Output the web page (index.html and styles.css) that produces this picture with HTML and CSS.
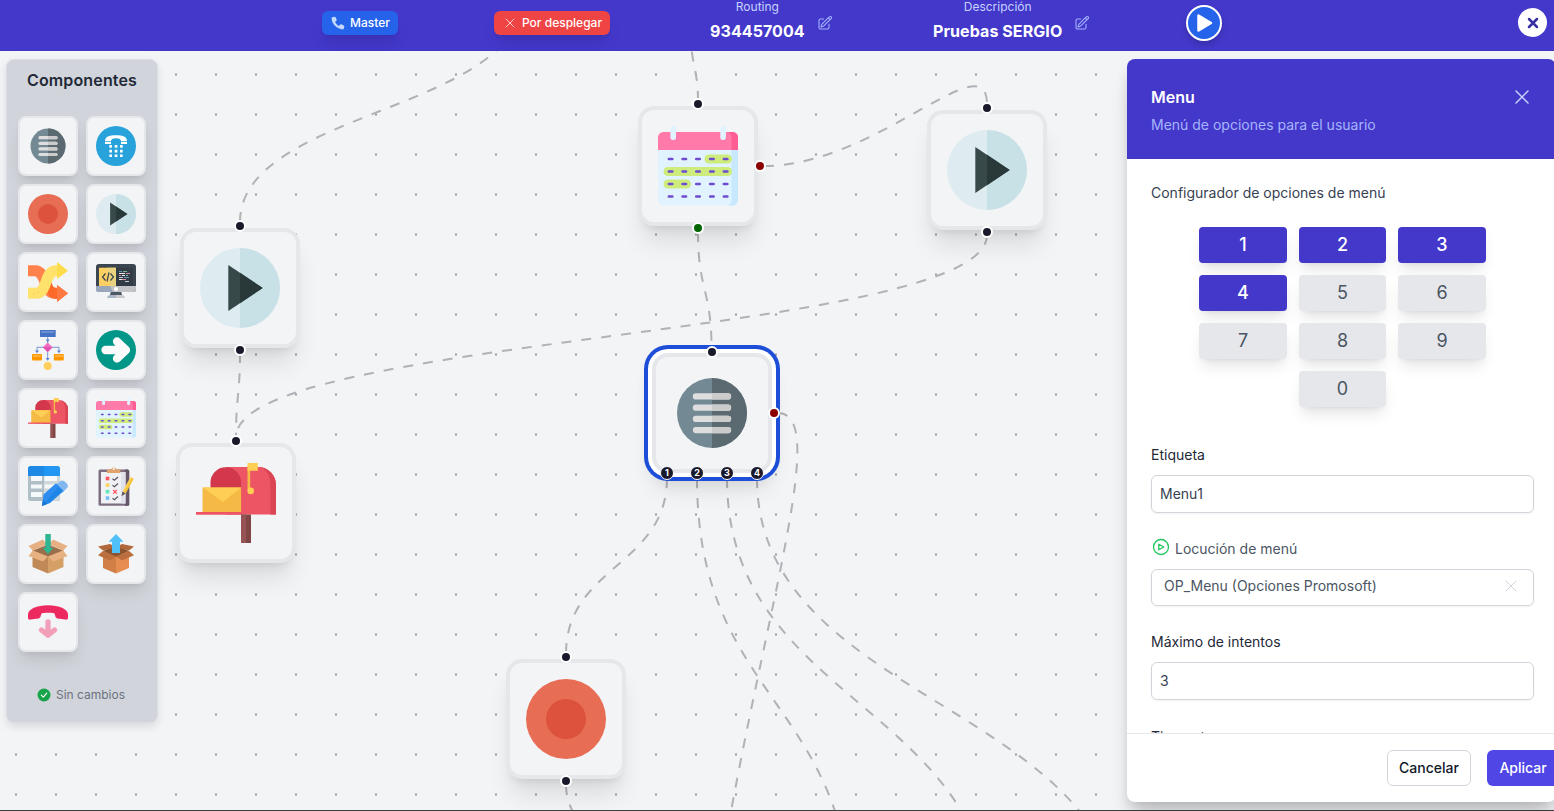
FILE: index.html
```html
<!DOCTYPE html>
<html lang="es">
<head>
<meta charset="utf-8">
<title>Routing 934457004</title>
<link rel="stylesheet" href="styles.css">
</head>
<body>
<svg class="sprite" aria-hidden="true">
  <symbol id="i-menu" viewBox="0 0 80 80">
    <circle cx="40" cy="40" r="35" fill="#738a95"/><path d="M40 5a35 35 0 0 1 0 70z" fill="#5a6a70"/>
    <g fill="#dedede"><rect x="20.8" y="20.2" width="38.4" height="6.3" rx="3.1"/><rect x="20.8" y="31.5" width="38.4" height="6.3" rx="3.1"/><rect x="20.8" y="42.7" width="38.4" height="6.3" rx="3.1"/><rect x="20.8" y="53.9" width="38.4" height="6.3" rx="3.1"/></g>
    <path d="M40 20.2h16a3.1 3.1 0 0 1 0 6.3H40zm0 11.3h16a3.1 3.1 0 0 1 0 6.3H40zm0 11.2h16a3.1 3.1 0 0 1 0 6.3H40zm0 11.2h16a3.1 3.1 0 0 1 0 6.3H40z" fill="#cbcbcb"/>
  </symbol>
  <symbol id="i-phone" viewBox="0 0 40 40">
    <circle cx="20" cy="20" r="20" fill="#27a2db"/>
    <path d="M9 15.2C9 10.700 13 9.200 20 9.200s11 1.500 11 6H25c0-2-1.500-3-5-3s-5 1-5 3z" fill="#fff"/><path d="M9 16h6v2H9zm16 0h6v2h-6z" fill="#fff"/>
    <path d="M13.300 19.100h2.700v2.700h-2.700zm5.400 0h2.700v2.700h-2.700zm5.300 0h2.700v2.700H24zm-10.700 4.700h2.700v2.700h-2.700zm5.400 0h2.700v2.700h-2.700zm5.300 0h2.700v2.700H24zm-10.700 4.600h2.700v2.700h-2.700zm5.400 0h2.700v2.700h-2.700zm5.300 0h2.700v2.700H24z" fill="#fff"/>
  </symbol>
  <symbol id="i-record" viewBox="0 0 80 80"><circle cx="40" cy="40" r="40" fill="#e76e54"/><circle cx="40" cy="40" r="20" fill="#dd523c"/></symbol>
  <symbol id="i-play" viewBox="0 0 80 80">
    <circle cx="40" cy="40" r="40" fill="#deebf0"/><path d="M40 0a40 40 0 0 1 0 80z" fill="#c8e1e6"/>
    <path d="M28.300 17L62.700 40 28.300 63z" fill="#384949"/><path d="M40 24.800L62.700 40 40 55.200z" fill="#293939"/>
  </symbol>
  <symbol id="i-shuffle" viewBox="0 0 40 40">
    <path d="M0 8.700h7c12 0 8 22.600 20 22.600h3" fill="none" stroke="#ff824d" stroke-width="11"/><path d="M17 25c2 7 5 12 12 12v3l11-8.700L29 23v3c-5 0-4-3-6-7z" fill="#ff6a2a"/><path d="M29 23l11 8.300L29 40z" fill="#ff7a42"/>
    <path d="M0 31.300h8c12 0 8-22.600 20-22.600h2" fill="none" stroke="#ffe26c" stroke-width="11"/><path d="M29 0l11 8.700L29 17z" fill="#fddc4c"/>
    <circle cx="6" cy="32" r=".7" fill="#f6c73c"/><circle cx="10" cy="30.500" r=".7" fill="#f6c73c"/>
  </symbol>
  <symbol id="i-code" viewBox="0 0 40 40">
    <path d="M15 29h10l1.500 6h-13z" fill="#4b5866"/><path d="M11 36c0-2 2-3 4-3h5v3z" fill="#a9b4c4"/><path d="M29 36c0-2-2-3-4-3h-5v3z" fill="#c9c9cc"/>
    <rect y="2" width="40" height="28" rx="3" fill="#3b4550"/><path d="M0 24h40v3a3 3 0 0 1-3 3H3a3 3 0 0 1-3-3z" fill="#c2c4c8"/><path d="M0 24h14l3 6H3a3 3 0 0 1-3-3z" fill="#9aa6ba"/>
    <rect x="3" y="5.700" width="34" height="18.300" fill="#333b45"/><path d="M3 5.700h17V24H3z" fill="#fbcf61"/><path d="M11 5.700h9V24h-6z" fill="#e9d37e"/>
    <path d="M9.500 11.500L6.500 15l3 3.500m5-7l3 3.500-3 3.500M13 10.500l-2 9" fill="none" stroke="#38424e" stroke-width="1.200"/>
    <circle cx="20" cy="27" r="2" fill="#fff"/>
    <g stroke-width=".9"><path d="M23 9.500h3m2 6h5" stroke="#6ea0c8"/><path d="M27 9.500h4m-1 4h2" stroke="#7fc8a0"/><path d="M23 11.500h6m-3 2h3m-6 4h3" stroke="#fff"/><path d="M30 11.500h4m-11 2h2m1 4h4" stroke="#e59aaf"/><path d="M23 15.500h4m2 4h4" stroke="#cfdde8"/></g>
  </symbol>
  <symbol id="i-flow" viewBox="0 0 40 40">
    <path d="M19.700 7v22M9 22v-4.700h22V22" fill="none" stroke="#7b98d2" stroke-width="1"/>
    <path d="M17.700 9.500h4l-2 2.800zM7 20.500h4l-2 2.800zm22 0h4l-2 2.800zM17.700 28h4l-2 2.800z" fill="#5b82cc"/>
    <rect x="12" width="15.700" height="7" fill="#4472c4"/><path d="M13 1h13v2H13z" fill="#6c8fd2"/>
    <path d="M19.700 12.500l4.800 4.800-4.800 4.800-4.800-4.800z" fill="#f26cc0"/><path d="M19.700 22.100l4.800-4.800h-9.600z" fill="#e04fb0"/>
    <rect x="4" y="24" width="10" height="6.500" rx="1" fill="#ff9800"/><rect x="25.800" y="24" width="10" height="6.500" rx="1" fill="#ff9800"/><path d="M5 25h8v2H5zm22 0h8v2h-8z" fill="#ffb03e"/>
    <circle cx="19.700" cy="36" r="4" fill="#ffcf5c"/>
  </symbol>
  <symbol id="i-arrow" viewBox="0 0 40 40"><circle cx="20" cy="20" r="20" fill="#009688"/><path d="M9.500 20H26M21 11.500L30 20l-9 8.500" fill="none" stroke="#fafafa" stroke-width="8.300" stroke-linecap="round" stroke-linejoin="round"/></symbol>
  <symbol id="i-mailbox" viewBox="0 0 80 80">
    <path d="M30 4h32a18 18 0 0 1 18 18v29.500H30z" fill="#ed5565"/><path d="M62 4a18 18 0 0 1 18 18v29.500h-5.500V22C74.500 12 70 5 62 4z" fill="#da4453"/>
    <path d="M14.500 51V19.500a15.300 15.300 0 0 1 30.600 0V51z" fill="#d3374c"/>
    <path d="M6.500 24.500h38.600V50H6.500z" fill="#f5b945"/><path d="M6.500 24.500h38.600L27 39z" fill="#ffce54"/><path d="M0 49h45v2.700H0z" fill="#ed5565"/>
    <path d="M45 51.500h10V80H45z" fill="#804545"/><path d="M45 51.500h5V80h-5z" fill="#965353"/>
    <path d="M51.500 3h2.700v24h-2.700z" fill="#f5b945"/><path d="M51.500 0h10.300v7.800H51.500z" fill="#ffce54"/><circle cx="54.700" cy="27.900" r="3.300" fill="#ffce54"/>
  </symbol>
  <symbol id="i-calendar" viewBox="0 0 80 80">
    <path d="M0 24h80v50a5.500 5.500 0 0 1-5.500 5.500h-69A5.500 5.500 0 0 1 0 74z" fill="#e1f3ff"/><path d="M73.500 24H80v50a5.500 5.500 0 0 1-5.500 5.500H70c2.500-1 3.500-3 3.500-5.500z" fill="#c7e8ff"/>
    <path d="M0 24V11.500A5.500 5.500 0 0 1 5.500 6h69A5.500 5.500 0 0 1 80 11.500V24z" fill="#ff79a9"/><path d="M68 6h6.500a5.500 5.500 0 0 1 5.500 5.500V24h-6.500V11.500C73.500 8 72 6.500 68 6z" fill="#ff5c94"/>
    <rect x="12.400" y="0" width="5.600" height="14" rx="2.500" fill="#e1f3ff"/><rect x="62.300" y="0" width="5.600" height="14" rx="2.500" fill="#e1f3ff"/>
    <g fill="#cdec7b"><rect x="46.500" y="28.500" width="27.500" height="9" rx="4.500"/><rect x="5.500" y="41" width="68.500" height="9" rx="4.500"/><rect x="5.500" y="53.500" width="27.500" height="9" rx="4.500"/></g>
    <path d="M10.900 33h3.400m10.300 0H28m10.300 0h3.400M52.200 33h3.400m10.300 0h3.400M10.900 45.500h3.400m10.300 0H28m10.300 0h3.400m10.500 0h3.400m10.300 0h3.400M10.900 58h3.400m10.300 0H28m10.300 0h3.400M52.200 58h3.400m10.300 0h3.400M10.900 70.500h3.400m10.300 0H28m10.300 0h3.400m10.500 0h3.400m10.300 0h3.400" stroke="#6e4bcf" stroke-width="2.700" stroke-linecap="round"/>
  </symbol>
  <symbol id="i-table" viewBox="0 0 40 40">
    <rect y="1" width="32" height="34" rx="2.500" fill="#b0bec5"/><path d="M16 10h16v25H16z" fill="#cfd8dc"/>
    <path d="M3 10h11v5H3zm0 8.500h11v4H3zM3 26h11v5H3zm13.500-16H29v5H16.500zm0 8.500H27v4H16.500zm0 7.500H20v5h-3.500z" fill="#f6f9fa"/>
    <path d="M2.500 0H16v10H0V2.500A2.500 2.500 0 0 1 2.500 0z" fill="#1e88e5"/><path d="M16 0h13.500A2.500 2.500 0 0 1 32 2.500V10H16z" fill="#2196f3"/>
    <path d="M27 19.500l5.500-4.500c2.500-2.500 9 3.500 7 6.500L34 27z" fill="#82b8f0"/><path d="M16 28L28 17.500l7.500 7.500L22 37l-8 3z" fill="#1f86e8"/><path d="M14 40l1.500-11L28 17.500l3 3z" fill="#2d8df0"/><path d="M14 40l1-6 4 4z" fill="#1976d2"/>
  </symbol>
  <symbol id="i-check" viewBox="0 0 40 40">
    <rect x="2.500" y="3.500" width="30.700" height="36.300" rx="1.500" fill="#7d6d80"/><path d="M29 3.500h2.700a1.500 1.500 0 0 1 1.500 1.500v33.500a1.500 1.500 0 0 1-1.500 1.300H29z" fill="#655568"/><path d="M5 6h24.500v31.500H5z" fill="#eff1f5"/><path d="M25 6h4.500v31.500H25z" fill="#dfe2ea"/>
    <path d="M11 3.500h4a2.800 2.800 0 0 1 5.400 0h4V7H11z" fill="#e2a26c"/><circle cx="17.700" cy="3" r="1" fill="#fff"/>
    <path d="M9.700 10.700h3.600v3.600H9.700z" fill="#ff5364"/><path d="M9.700 17.300h3.600v3.600H9.700z" fill="#ffd35a"/><path d="M9.700 23.800h3.600v3.600H9.700z" fill="#5fe8b8"/><path d="M9.700 30.300h3.600v3.600H9.700z" fill="#79bdf8"/>
    <path d="M16.500 12.700l2 1.500 3.500-3.200m-5.500 8.200l2 1.500 3.500-3.200m-5.500 14.700l2 1.500 3.500-3.200" fill="none" stroke="#5d5360" stroke-width="1.200"/><path d="M17.200 24l3.600 3.600m0-3.600l-3.600 3.600" stroke="#ff5364" stroke-width="1.300"/>
    <path d="M34.500 11l3 2-8 14.500-3-2z" fill="#ffd457"/><path d="M36 11.500l1.500 1.500-8 14.500-1.500-1z" fill="#f5c23e"/><path d="M26.500 25.500l3 2-4 2.800z" fill="#5d5360"/>
  </symbol>
  <symbol id="i-boxin" viewBox="0 0 40 40">
    <path d="M4.500 16L20 22v17.500L4.500 33z" fill="#c08a58"/><path d="M35.500 16L20 22v17.500L35.500 33z" fill="#d5a066"/><path d="M5 16.500L20 10.500l15 6L20 23z" fill="#996e4a"/>
    <path d="M5 16.500L.5 12 15 5.500l4 5zm30 0l4.500-4.500L25 5.500l-4 5z" fill="#e6b083"/><path d="M5 16.500L.5 22 15 27.500l5-5zm30 0l4.500 5.500L25 27.500l-5-5z" fill="#e8b182"/>
    <path d="M17.300 0h5.500v14h2.500L20 20l-5.300-6h2.600z" fill="#2fb592"/>
  </symbol>
  <symbol id="i-boxout" viewBox="0 0 40 40">
    <path d="M7 17l13 5.500v17L7 34z" fill="#d17e47"/><path d="M33 17l-13 5.500v17L33 34z" fill="#e68d51"/><path d="M7 17l13-6 13 6-13 6z" fill="#8d5430"/>
    <path d="M7 16.500l-5-4 12-2.500 6 3zm26 0l5-4-12-2.500-6 3z" fill="#b1683a"/><path d="M7 17l-5 4.300 12 5.200 6-4zm26 0l5 4.300-12 5.200-6-4z" fill="#bb6e3e"/>
    <path d="M20 0l7.500 7.700H24V19h-8V7.700h-3.500z" fill="#4fc0f8"/>
  </symbol>
  <symbol id="i-hangup" viewBox="0 0 40 40">
    <path d="M0 12.500C0 7 9 3.200 20 3.200s20 3.800 20 9.300v3.300c0 1.500-1 2-2.500 1.800l-8-1.200c-3-.5-2-4.700-3.500-5.200-3-.7-9-.7-12 0-1.500.5-.5 4.700-3.500 5.200l-8 1.200C1 17.800 0 17.300 0 15.800z" fill="#ed2a5f"/>
    <path d="M20 20v13m-6.500-5l6.500 5.200 6.500-5.200" fill="none" stroke="#f2a0ba" stroke-width="5.300" stroke-linecap="round" stroke-linejoin="round"/>
  </symbol>
  <symbol id="i-edit" viewBox="0 0 24 24"><path d="M16.860 4.490l1.690-1.690a1.880 1.880 0 1 1 2.650 2.650L10.580 16.070a4.500 4.500 0 0 1-1.900 1.130L6 18l.8-2.690a4.500 4.500 0 0 1 1.130-1.890l8.930-8.930zm0 0L19.500 7.120M18 14v4.750A2.250 2.250 0 0 1 15.750 21H5.250A2.250 2.250 0 0 1 3 18.750V8.250A2.250 2.250 0 0 1 5.250 6H10" fill="none" stroke="currentColor" stroke-width="1.600" stroke-linecap="round" stroke-linejoin="round"/></symbol>
  <symbol id="i-x" viewBox="0 0 24 24"><path d="M6 18L18 6M6 6l12 12" fill="none" stroke="currentColor" stroke-width="var(--sw,1.500)" stroke-linecap="round"/></symbol>
</svg>

<header class="topbar">
  <span class="badge badge-blue"><svg width="16" height="16" viewBox="0 0 16 16"><path d="M2.200 2.300L4.600 1.700c.4-.1.800.1 1 .5l1.100 2.600c.1.400 0 .8-.3 1L5.100 7c.8 1.700 2.200 3.100 3.900 3.900l1.200-1.300c.3-.3.700-.4 1-.3l2.600 1.100c.4.200.6.600.5 1l-.6 2.400c-.1.400-.4.600-.8.600C7 14.400 1.600 9 1.600 3.100c0-.4.200-.7.600-.8z" fill="#c3dafe"/></svg>Master</span>
  <span class="badge badge-red"><svg width="16" height="16"><use href="#i-x"/></svg>Por desplegar</span>
  <div class="info info-routing"><div class="info-text"><span class="info-label">Routing</span><strong>934457004</strong></div><svg class="edit" width="16" height="16"><use href="#i-edit"/></svg></div>
  <div class="info info-desc"><div class="info-text"><span class="info-label">Descripción</span><strong>Pruebas SERGIO</strong></div><svg class="edit" width="16" height="16"><use href="#i-edit"/></svg></div>
  <button class="run" aria-label="Ejecutar"><svg width="18" height="20" viewBox="0 0 18 20"><path d="M2.500 2.500v15L15 10z" fill="#fff" stroke="#fff" stroke-width="2.500" stroke-linejoin="round"/></svg></button>
  <button class="exit" aria-label="Salir"><svg width="12" height="12" viewBox="0 0 12 12"><path d="M2 2l8 8m0-8l-8 8" stroke="#3730a3" stroke-width="2.500" stroke-linecap="round"/></svg></button>
</header>

<main class="workspace">
  <div class="canvas">
    <svg class="edges" viewBox="0 51 1554 760" width="1554" height="760">
      <path d="M240 222C240 111 520 111 520 0"/>
      <path d="M698 101C698 66 690 66 690 20"/>
      <path d="M764 166C876 166 987 41 987 104"/>
      <path d="M987 235C987 336 236 336 236 437"/>
      <path d="M240 353C240 395 236 395 236 437"/>
      <path d="M698 232C698 290 711.500 290 711.500 348"/>
      <path d="M667 478C667 566 566 566 566 654"/>
      <path d="M778 413C852 413 690 806 690 1200"/>
      <path d="M697 478C697 701 852 701 852 925"/>
      <path d="M727 478C727 704 993 704 993 930"/>
      <path d="M757 478C757 704 1123 704 1123 930"/>
      <path d="M566 785C566 815 590 835 610 850"/>
    </svg>
    <div class="node n-cal"><svg width="80" height="80"><use href="#i-calendar"/></svg><i class="h top"></i><i class="h bottom green"></i><i class="h right red"></i></div>
    <div class="node n-play2"><svg width="80" height="80"><use href="#i-play"/></svg><i class="h top"></i><i class="h bottom"></i></div>
    <div class="node n-play1"><svg width="80" height="80"><use href="#i-play"/></svg><i class="h top"></i><i class="h bottom"></i></div>
    <div class="node n-mail"><svg width="80" height="80"><use href="#i-mailbox"/></svg><i class="h top"></i></div>
    <div class="node n-rec"><svg width="80" height="80"><use href="#i-record"/></svg><i class="h top"></i><i class="h bottom"></i></div>
    <div class="node n-menu selected"><svg width="80" height="80"><use href="#i-menu"/></svg><i class="h top"></i><i class="h right red"></i>
      <div class="outputs"><b>1</b><b>2</b><b>3</b><b>4</b></div></div>
  </div>

  <aside class="palette">
    <h2>Componentes</h2>
    <div class="tiles">
      <div class="tile"><svg><use href="#i-menu"/></svg></div><div class="tile"><svg><use href="#i-phone"/></svg></div>
      <div class="tile"><svg><use href="#i-record"/></svg></div><div class="tile"><svg><use href="#i-play"/></svg></div>
      <div class="tile"><svg><use href="#i-shuffle"/></svg></div><div class="tile"><svg><use href="#i-code"/></svg></div>
      <div class="tile"><svg><use href="#i-flow"/></svg></div><div class="tile"><svg><use href="#i-arrow"/></svg></div>
      <div class="tile"><svg><use href="#i-mailbox"/></svg></div><div class="tile"><svg><use href="#i-calendar"/></svg></div>
      <div class="tile"><svg><use href="#i-table"/></svg></div><div class="tile"><svg><use href="#i-check"/></svg></div>
      <div class="tile"><svg><use href="#i-boxin"/></svg></div><div class="tile"><svg><use href="#i-boxout"/></svg></div>
      <div class="tile"><svg><use href="#i-hangup"/></svg></div>
    </div>
    <p class="status"><svg width="14" height="14" viewBox="0 0 14 14"><circle cx="7" cy="7" r="6.500" fill="#16a34a"/><path d="M4.300 7.200l2 2 3.400-4" fill="none" stroke="#fff" stroke-width="1.200" stroke-linecap="round" stroke-linejoin="round"/></svg>Sin cambios</p>
  </aside>

  <section class="panel">
    <div class="panel-head">
      <div class="panel-title"><h1>Menu</h1><svg width="24" height="24"><use href="#i-x"/></svg></div>
      <p>Menú de opciones para el usuario</p>
    </div>
    <div class="panel-body">
      <p class="label soft">Configurador de opciones de menú</p>
      <div class="keypad">
        <button class="on">1</button><button class="on">2</button><button class="on">3</button>
        <button class="on">4</button><button>5</button><button>6</button>
        <button>7</button><button>8</button><button>9</button>
        <button class="zero">0</button>
      </div>
      <div class="label">Etiqueta</div>
      <div class="field">Menu1</div>
      <div class="label loc"><svg width="20" height="20" viewBox="0 0 20 20" fill="none" stroke="#22c55e" stroke-width="1.300" stroke-linejoin="round"><circle cx="10" cy="10" r="7.500"/><path d="M7.800 7.200v5.600l5-2.800z"/></svg>Locución de menú</div>
      <div class="field select">OP_Menu (Opciones Promosoft)<svg width="20" height="20"><use href="#i-x"/></svg></div>
      <div class="label third">Máximo de intentos</div>
      <div class="field">3</div>
      <div class="label fourth">Timeout</div>
    </div>
    <div class="panel-foot"><button class="cancel">Cancelar</button><button class="apply">Aplicar</button></div>
  </section>
</main>
</body>
</html>
```
FILE: styles.css
```css
* { box-sizing: border-box; }
body {
  margin: 0;
  width: 1554px;
  height: 811px;
  overflow: hidden;
  display: flex;
  flex-direction: column;
  font-family: Inter, "Liberation Sans", sans-serif;
  font-size: 14px;
  line-height: 20px;
  color: #374151;
  background: #f3f4f6;
}
h1, h2, p { margin: 0; }
button { font: inherit; border: 0; padding: 0; }
svg { flex: none; display: block; }
.sprite { position: absolute; width: 0; height: 0; }

.topbar {
  flex: none;
  display: flex;
  height: 51px;
  padding: 0 7px 0 322px;
  background: #4338ca;
  color: #fff;
}
.badge {
  display: flex;
  align-items: center;
  height: 24px;
  margin-top: 11px;
  border-radius: 6px;
  font-size: 12px;
  font-weight: 500;
  white-space: nowrap;
  box-shadow: 0 10px 15px -3px rgba(0,0,0,.1), 0 4px 6px -4px rgba(0,0,0,.1);
}
.badge-blue { width: 76px; padding-left: 8px; gap: 4px; background: #2563eb; }
.badge-red { width: 116px; padding-left: 8px; gap: 4px; margin-left: 96px; background: #ef4444; }
.badge-red svg { color: #fecaca; }
.info { display: flex; gap: 12px; }
.info-routing { width: 123px; margin-left: 100px; }
.info-desc { width: 157px; margin-left: 100px; }
.info-text { display: flex; flex-direction: column; align-items: center; white-space: nowrap; }
.info-label { font-size: 12px; line-height: 14px; color: #c7d2fe; }
.info strong { margin-top: 5px; font-size: 16px; line-height: 24px; font-weight: 700; letter-spacing: .08px; }
.edit { margin-top: 15px; color: #a5b4fc; }
.run {
  display: flex; align-items: center; justify-content: center;
  width: 36px; height: 36px;
  margin: 5px 0 0 96px;
  padding-left: 2px;
  border: 2px solid #fff; border-radius: 50%;
  background: #2563eb;
  box-shadow: 0 4px 6px rgba(0,0,0,.15);
}
.exit {
  display: flex; align-items: center; justify-content: center;
  width: 29px; height: 29px;
  margin: 8px 0 0 auto;
  border-radius: 50%;
  background: #fff;
}

.workspace {
  position: relative;
  flex: 1;
  display: flex;
  align-items: flex-start;
  padding: 8px 0 0 6px;
  border-bottom: 1px solid #3f3f42;
}
.canvas {
  position: absolute; inset: 0;
  overflow: hidden;
  background: #f3f4f6 radial-gradient(circle, #9b9ba1 .8px, transparent 1.300px) 156px 3.500px / 40px 40px;
}
.edges { position: absolute; left: 0; top: 0; fill: none; stroke: #b1b1b7; stroke-width: 2; stroke-dasharray: 10; }
.node {
  position: absolute;
  width: 120px; height: 120px;
  padding: 16px;
  border: 4px solid #e5e7eb;
  border-radius: 16px;
  background: #f3f4f6;
  box-shadow: 0 20px 25px -5px rgba(0,0,0,.1), 0 8px 10px -6px rgba(0,0,0,.1);
}
.n-cal { left: 638px; top: 55px; }
.n-play2 { left: 927px; top: 59px; }
.n-play1 { left: 180px; top: 177px; }
.n-mail { left: 176px; top: 392px; }
.n-rec { left: 506px; top: 608px; }
.n-menu { left: 652px; top: 302px; }
.selected { box-shadow: 0 0 0 4px #fff, 0 0 0 8px #1d4ed8, 0 20px 25px -5px rgba(0,0,0,.1), 0 8px 18px 0 rgba(0,0,0,.08); }
.h {
  position: absolute;
  width: 12px; height: 12px;
  border: 2px solid #fff; border-radius: 50%;
  background: #1a192b;
}
.top { left: 50px; top: -12px; }
.bottom { left: 50px; bottom: -12px; }
.right { right: -12px; top: 50px; }
.red { background: #8b0000; }
.green { background: #006400; }
.selected .top { top: -11px; }
.outputs { position: absolute; left: 4px; bottom: -11px; display: flex; gap: 16px; }
.outputs b {
  width: 14px; height: 14px;
  border: 1px solid #fff; border-radius: 50%;
  background: #1a192b; color: #fff;
  font-size: 9px; line-height: 11px; text-align: center;
}

.palette {
  position: relative;
  width: 152px; height: 664px;
  padding: 8px 11px 0;
  border: 1px solid #dadde3;
  border-radius: 8px;
  background: #d1d5db;
  box-shadow: 0 4px 8px rgba(0,0,0,.1);
}
.palette h2 { font-size: 16px; line-height: 24px; font-weight: 600; letter-spacing: .15px; text-align: center; color: #1f2937; }
.tiles { display: grid; grid-template-columns: 60px 60px; gap: 8px; margin-top: 24px; }
.tile {
  width: 60px; height: 60px;
  padding: 8px;
  border: 2px solid #e5e7eb;
  border-radius: 8px;
  background: #f3f4f6;
  box-shadow: 0 10px 15px -3px rgba(0,0,0,.1), 0 4px 6px -4px rgba(0,0,0,.1);
}
.tile svg { width: 40px; height: 40px; }
.status { display: flex; align-items: center; justify-content: center; gap: 5px; margin: 33px 1px 0 -1px; font-size: 12px; color: #6b7280; }

.panel {
  position: relative;
  display: flex; flex-direction: column;
  width: 429px; height: 743px;
  margin-left: 969px;
  flex: none;
  border-radius: 8px;
  background: #fff;
  box-shadow: 0 20px 25px -5px rgba(0,0,0,.12), 0 8px 14px -3px rgba(0,0,0,.18);
}
.panel-head { height: 100px; padding: 24px; border-radius: 8px 8px 0 0; background: #4338ca; color: #a5b4fc; }
.panel-title { display: flex; justify-content: space-between; align-items: center; height: 28px; margin-right: -2px; color: #c7d2fe; }
.panel-title h1 { font-size: 16px; line-height: 28px; font-weight: 600; color: #fff; }
.panel-head p { margin-top: 4px; }
.panel-body { flex: 1; overflow: hidden; padding: 24px 22px 0 24px; }
.label { color: #1f2937; height: 20px; }
.soft { color: #374151; }
.keypad { display: grid; grid-template-columns: 88px 87px 88px; gap: 12px; margin: 24px 0 38px 48px; }
.keypad button {
  height: 36px;
  border-radius: 4px;
  font-size: 18px;
  background: #e5e7eb; color: #4b5563;
  box-shadow: 0 10px 15px -3px rgba(0,0,0,.1), 0 4px 6px -4px rgba(0,0,0,.1);
}
.keypad .on { background: #4338ca; color: #fff; font-weight: 500; }
.keypad .zero { grid-column: 2; }
.field {
  display: flex; align-items: center; justify-content: space-between;
  height: 38px;
  margin-top: 10px;
  padding: 0 8px;
  border: 1px solid #d1d5db;
  border-radius: 6px;
  color: #374151;
  box-shadow: 0 1px 2px rgba(0,0,0,.05);
}
.loc { display: flex; gap: 4px; margin-top: 26px; color: #4b5563; }
.loc svg { margin-top: -2px; }
.select { height: 37px; padding: 0 12px 3px; color: #4b5563; }
.select svg { color: #d1d5db; --sw: 1.200; }
.third { margin-top: 26px; }
.fourth { margin-top: 27px; }
.panel-foot { display: flex; gap: 16px; height: 69px; padding: 16px 0 0 260px; border-top: 1px solid #e5e7eb; }
.panel-foot button { flex: none; height: 36px; border-radius: 6px; font-weight: 500; }
.cancel { width: 84px; background: #fff; color: #111827; border: 1px solid #d1d5db; }
.apply { width: 72px; background: #4f46e5; color: #fff; }
```
